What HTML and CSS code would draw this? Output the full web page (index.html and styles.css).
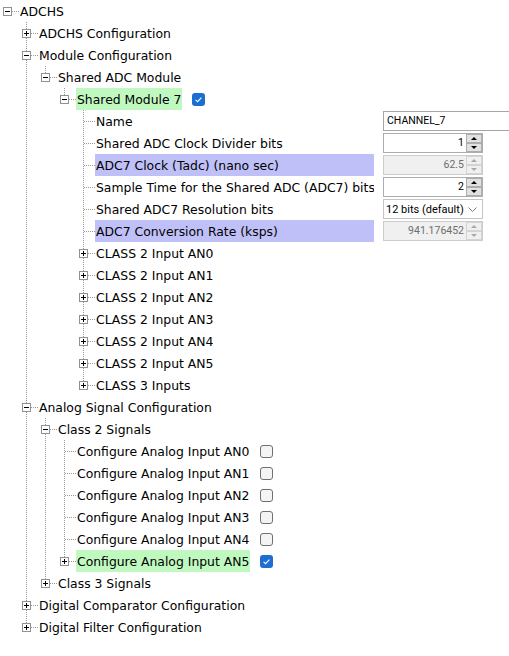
FILE: index.html
```html
<!DOCTYPE html>
<html>
<head>
<meta charset="utf-8">
<link rel="stylesheet" href="styles.css">
</head>
<body>
<div class="outline">
  <div class="row"><div class="tree"><span class="own root"><i class="box minus"></i></span><div class="lbl"><span class="txt">ADCHS</span></div></div><div class="val"></div></div>
  <div class="row"><div class="tree"><span class="g"></span><span class="own full"><i class="box plus"></i></span><div class="lbl"><span class="txt">ADCHS Configuration</span></div></div><div class="val"></div></div>
  <div class="row"><div class="tree"><span class="g"></span><span class="own full"><i class="box minus"></i></span><div class="lbl"><span class="txt">Module Configuration</span></div></div><div class="val"></div></div>
  <div class="row"><div class="tree"><span class="g"></span><span class="g l"></span><span class="own half"><i class="box minus"></i></span><div class="lbl"><span class="txt">Shared ADC Module</span></div></div><div class="val"></div></div>
  <div class="row"><div class="tree"><span class="g"></span><span class="g l"></span><span class="g"></span><span class="own half"><i class="box minus"></i></span><div class="lbl"><span class="txt grn">Shared Module 7</span><svg class="cb" width="13" height="13" viewBox="0 0 13 13"><rect x="0" y="0" width="13" height="13" rx="3" fill="#1c6fd0"/><polyline points="3.6,6.8 5.6,8.7 9.4,4.6" fill="none" stroke="#fff" stroke-width="1.1"/></svg></div></div><div class="val"></div></div>

  <div class="row"><div class="tree"><span class="g"></span><span class="g l"></span><span class="g"></span><span class="g"></span><span class="own full"></span><div class="lbl"><span class="txt">Name</span></div></div><div class="val"><div class="tf">CHANNEL_7</div></div></div>
  <div class="row"><div class="tree"><span class="g"></span><span class="g l"></span><span class="g"></span><span class="g"></span><span class="own full"></span><div class="lbl"><span class="txt">Shared ADC Clock Divider bits</span></div></div><div class="val"><div class="spin"><span class="num">1</span><span class="btns"><span class="btn up"></span><span class="btn down"></span></span></div></div></div>
  <div class="row"><div class="tree"><span class="g"></span><span class="g l"></span><span class="g"></span><span class="g"></span><span class="own full"></span><div class="lbl lav"><span class="txt">ADC7 Clock (Tadc) (nano sec)</span></div></div><div class="val"><div class="spin dis"><span class="num">62.5</span><span class="btns"><span class="btn up"></span><span class="btn down"></span></span></div></div></div>
  <div class="row"><div class="tree"><span class="g"></span><span class="g l"></span><span class="g"></span><span class="g"></span><span class="own full"></span><div class="lbl"><span class="txt">Sample Time for the Shared ADC (ADC7) bits</span></div></div><div class="val"><div class="spin"><span class="num">2</span><span class="btns"><span class="btn up"></span><span class="btn down"></span></span></div></div></div>
  <div class="row"><div class="tree"><span class="g"></span><span class="g l"></span><span class="g"></span><span class="g"></span><span class="own full"></span><div class="lbl"><span class="txt">Shared ADC7 Resolution bits</span></div></div><div class="val"><div class="combo"><span class="ctext">12 bits (default)</span><svg class="chev" width="9" height="5" viewBox="0 0 9 5"><polyline points="0.5,0.5 4.5,4.5 8.5,0.5" fill="none" stroke="#808080" stroke-width="1"/></svg></div></div></div>
  <div class="row"><div class="tree"><span class="g"></span><span class="g l"></span><span class="g"></span><span class="g"></span><span class="own full"></span><div class="lbl lav"><span class="txt">ADC7 Conversion Rate (ksps)</span></div></div><div class="val"><div class="spin dis"><span class="num">941.176452</span><span class="btns"><span class="btn up"></span><span class="btn down"></span></span></div></div></div>

  <div class="row"><div class="tree"><span class="g"></span><span class="g l"></span><span class="g"></span><span class="g"></span><span class="own full"><i class="box plus"></i></span><div class="lbl"><span class="txt">CLASS 2 Input AN0</span></div></div><div class="val"></div></div>
  <div class="row"><div class="tree"><span class="g"></span><span class="g l"></span><span class="g"></span><span class="g"></span><span class="own full"><i class="box plus"></i></span><div class="lbl"><span class="txt">CLASS 2 Input AN1</span></div></div><div class="val"></div></div>
  <div class="row"><div class="tree"><span class="g"></span><span class="g l"></span><span class="g"></span><span class="g"></span><span class="own full"><i class="box plus"></i></span><div class="lbl"><span class="txt">CLASS 2 Input AN2</span></div></div><div class="val"></div></div>
  <div class="row"><div class="tree"><span class="g"></span><span class="g l"></span><span class="g"></span><span class="g"></span><span class="own full"><i class="box plus"></i></span><div class="lbl"><span class="txt">CLASS 2 Input AN3</span></div></div><div class="val"></div></div>
  <div class="row"><div class="tree"><span class="g"></span><span class="g l"></span><span class="g"></span><span class="g"></span><span class="own full"><i class="box plus"></i></span><div class="lbl"><span class="txt">CLASS 2 Input AN4</span></div></div><div class="val"></div></div>
  <div class="row"><div class="tree"><span class="g"></span><span class="g l"></span><span class="g"></span><span class="g"></span><span class="own full"><i class="box plus"></i></span><div class="lbl"><span class="txt">CLASS 2 Input AN5</span></div></div><div class="val"></div></div>
  <div class="row"><div class="tree"><span class="g"></span><span class="g l"></span><span class="g"></span><span class="g"></span><span class="own half"><i class="box plus"></i></span><div class="lbl"><span class="txt">CLASS 3 Inputs</span></div></div><div class="val"></div></div>

  <div class="row"><div class="tree"><span class="g"></span><span class="own full"><i class="box minus"></i></span><div class="lbl"><span class="txt">Analog Signal Configuration</span></div></div><div class="val"></div></div>
  <div class="row"><div class="tree"><span class="g"></span><span class="g l"></span><span class="own full"><i class="box minus"></i></span><div class="lbl"><span class="txt">Class 2 Signals</span></div></div><div class="val"></div></div>
  <div class="row"><div class="tree"><span class="g"></span><span class="g l"></span><span class="g l"></span><span class="own full"></span><div class="lbl"><span class="txt">Configure Analog Input AN0</span><svg class="cb" width="13" height="13" viewBox="0 0 13 13"><rect x="0.5" y="0.5" width="12" height="12" rx="2.5" fill="#f4f4f4" stroke="#707070"/></svg></div></div><div class="val"></div></div>
  <div class="row"><div class="tree"><span class="g"></span><span class="g l"></span><span class="g l"></span><span class="own full"></span><div class="lbl"><span class="txt">Configure Analog Input AN1</span><svg class="cb" width="13" height="13" viewBox="0 0 13 13"><rect x="0.5" y="0.5" width="12" height="12" rx="2.5" fill="#f4f4f4" stroke="#707070"/></svg></div></div><div class="val"></div></div>
  <div class="row"><div class="tree"><span class="g"></span><span class="g l"></span><span class="g l"></span><span class="own full"></span><div class="lbl"><span class="txt">Configure Analog Input AN2</span><svg class="cb" width="13" height="13" viewBox="0 0 13 13"><rect x="0.5" y="0.5" width="12" height="12" rx="2.5" fill="#f4f4f4" stroke="#707070"/></svg></div></div><div class="val"></div></div>
  <div class="row"><div class="tree"><span class="g"></span><span class="g l"></span><span class="g l"></span><span class="own full"></span><div class="lbl"><span class="txt">Configure Analog Input AN3</span><svg class="cb" width="13" height="13" viewBox="0 0 13 13"><rect x="0.5" y="0.5" width="12" height="12" rx="2.5" fill="#f4f4f4" stroke="#707070"/></svg></div></div><div class="val"></div></div>
  <div class="row"><div class="tree"><span class="g"></span><span class="g l"></span><span class="g l"></span><span class="own full"></span><div class="lbl"><span class="txt">Configure Analog Input AN4</span><svg class="cb" width="13" height="13" viewBox="0 0 13 13"><rect x="0.5" y="0.5" width="12" height="12" rx="2.5" fill="#f4f4f4" stroke="#707070"/></svg></div></div><div class="val"></div></div>
  <div class="row"><div class="tree"><span class="g"></span><span class="g l"></span><span class="g l"></span><span class="own half"><i class="box plus"></i></span><div class="lbl"><span class="txt grn">Configure Analog Input AN5</span><svg class="cb" width="13" height="13" viewBox="0 0 13 13"><rect x="0" y="0" width="13" height="13" rx="3" fill="#1c6fd0"/><polyline points="3.6,6.8 5.6,8.7 9.4,4.6" fill="none" stroke="#fff" stroke-width="1.1"/></svg></div></div><div class="val"></div></div>
  <div class="row"><div class="tree"><span class="g"></span><span class="g l"></span><span class="own half"><i class="box plus"></i></span><div class="lbl"><span class="txt">Class 3 Signals</span></div></div><div class="val"></div></div>
  <div class="row"><div class="tree"><span class="g"></span><span class="own full"><i class="box plus"></i></span><div class="lbl"><span class="txt">Digital Comparator Configuration</span></div></div><div class="val"></div></div>
  <div class="row"><div class="tree"><span class="g"></span><span class="own half"><i class="box plus"></i></span><div class="lbl"><span class="txt">Digital Filter Configuration</span></div></div><div class="val"></div></div>
</div>
</body>
</html>
```
FILE: styles.css
```css
html, body {
  margin: 0;
  padding: 0;
  background: #ffffff;
  overflow: hidden;
}
body {
  font-family: "DejaVu Sans", "Verdana", sans-serif;
  font-size: 12.4px;
  color: #000000;
}
.outline {
  display: flex;
  flex-direction: column;
}
.row {
  display: grid;
  grid-template-columns: 374px minmax(0, 1fr);
  height: 22px;
}
.tree {
  display: flex;
  height: 22px;
  min-width: 0;
}
.g, .own {
  flex: 0 0 19px;
  height: 22px;
  box-sizing: border-box;
}
.g.l {
  background-image: repeating-linear-gradient(to bottom, #999999 0 1px, transparent 1px 2px);
  background-size: 1px 22px;
  background-position: 7px 0;
  background-repeat: no-repeat;
}
.own {
  display: flex;
  align-items: flex-start;
  padding: 7px 0 0 3px;
  background-image: repeating-linear-gradient(to right, #999999 0 1px, transparent 1px 2px);
  background-size: 12px 1px;
  background-position: 8px 11px;
  background-repeat: no-repeat;
}
.own.full {
  background-image: repeating-linear-gradient(to right, #999999 0 1px, transparent 1px 2px),
                    repeating-linear-gradient(to bottom, #999999 0 1px, transparent 1px 2px);
  background-size: 12px 1px, 1px 22px;
  background-position: 8px 11px, 7px 0;
  background-repeat: no-repeat, no-repeat;
}
.own.half {
  background-image: repeating-linear-gradient(to right, #999999 0 1px, transparent 1px 2px),
                    repeating-linear-gradient(to bottom, #999999 0 1px, transparent 1px 2px);
  background-size: 12px 1px, 1px 11px;
  background-position: 8px 11px, 7px 0;
  background-repeat: no-repeat, no-repeat;
}
.box {
  display: block;
  width: 9px;
  height: 9px;
  box-sizing: border-box;
  border: 1px solid #919191;
  background-color: #ffffff;
  background-repeat: no-repeat;
}
.box.minus {
  background-image: linear-gradient(#000000, #000000);
  background-size: 5px 1px;
  background-position: 1px 3px;
}
.box.plus {
  background-image: linear-gradient(#000000, #000000), linear-gradient(#000000, #000000);
  background-size: 5px 1px, 1px 5px;
  background-position: 1px 3px, 3px 1px;
}
.lbl {
  flex: 1 1 auto;
  min-width: 0;
  display: flex;
  align-items: flex-start;
  white-space: nowrap;
  overflow: hidden;
  height: 22px;
}
.lbl.lav {
  background: #c0c0f8;
}
.txt {
  padding: 2px 1px 0 1px;
  line-height: 20px;
  height: 22px;
  box-sizing: border-box;
}
.txt.grn {
  background: #c0f9c0;
}
.cb {
  flex: 0 0 auto;
  margin: 5px 0 0 10px;
}
.val {
  padding: 1px 0 0 9px;
  overflow: hidden;
  display: flex;
  align-items: flex-start;
  height: 22px;
  box-sizing: border-box;
}
.tf {
  width: 140px;
  height: 20px;
  box-sizing: border-box;
  border: 1px solid #a6a6a6;
  font-family: Roboto, "Liberation Sans", sans-serif;
  font-size: 10.5px;
  line-height: 18px;
  padding-left: 3px;
  flex: 0 0 auto;
  background: #ffffff;
}
.spin {
  width: 100px;
  height: 20px;
  box-sizing: border-box;
  border: 1px solid #abadb3;
  display: flex;
  background: #ffffff;
  font-family: Roboto, "Liberation Sans", sans-serif;
  font-size: 10.5px;
}
.num {
  flex: 1 1 auto;
  text-align: right;
  padding-right: 2px;
  line-height: 18px;
}
.btns {
  flex: 0 0 16px;
  display: flex;
  flex-direction: column;
  padding: 0;
}
.btn {
  flex: 1 1 0;
  box-sizing: border-box;
  border: 1px solid #adadad;
  background: #e1e1e1;
  display: flex;
  align-items: center;
  justify-content: center;
}
.btn.up::before {
  content: "";
  border-left: 3px solid transparent;
  border-right: 3px solid transparent;
  border-bottom: 3px solid #000000;
}
.btn.down::before {
  content: "";
  border-left: 3px solid transparent;
  border-right: 3px solid transparent;
  border-top: 3px solid #000000;
}
.spin.dis {
  background: #f0f0f0;
  border-color: #cccccc;
  color: #6d6d6d;
}
.spin.dis .btn {
  background: #f0f0f0;
  border-color: #d4d4d4;
}
.spin.dis .btn.up::before {
  border-bottom-color: #a8a8a8;
}
.spin.dis .btn.down::before {
  border-top-color: #a8a8a8;
}
.combo {
  width: 100px;
  height: 20px;
  box-sizing: border-box;
  border: 1px solid #c4c4c4;
  display: flex;
  align-items: center;
  background: #ffffff;
  font-family: Roboto, "Liberation Sans", sans-serif;
  font-size: 11px;
  padding-left: 2px;
}
.ctext {
  white-space: nowrap;
}
.chev {
  margin-left: auto;
  margin-right: 5px;
}
```
